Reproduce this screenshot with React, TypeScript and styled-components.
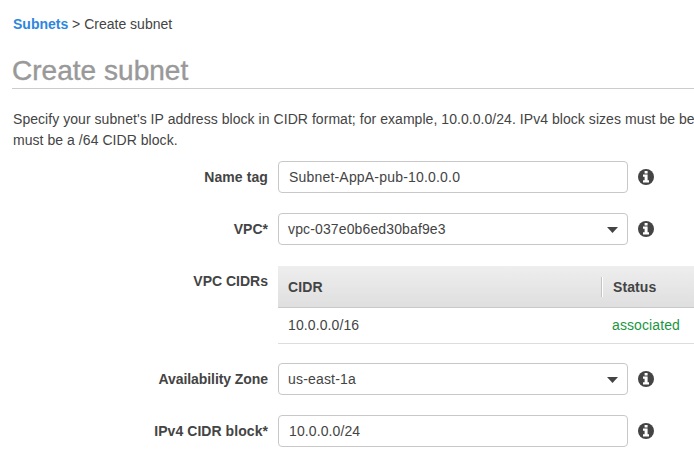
import React from "react";
import styled, { createGlobalStyle } from "styled-components";

const GlobalStyle = createGlobalStyle`
  * { box-sizing: border-box; }
  body {
    margin: 0;
    overflow: hidden;
    background: #fff;
    color: #444;
    font: 14px/20px "Liberation Sans", Arial, sans-serif;
  }
`;

const Page = styled.main`
  width: 694px;
  height: 469px;
  padding: 14px 0 0 12px;
  overflow: hidden;
`;

const Breadcrumb = styled.nav`
  height: 20px;
  padding-left: 1px;
  white-space: nowrap;
`;

const Crumb = styled.a`
  color: #2e86de;
  font-weight: bold;
  text-decoration: none;
`;

const Title = styled.h1`
  height: 41px;
  margin: 14px 0 0;
  padding-top: 6px;
  border-bottom: 1px solid #ccc;
  color: #999;
  font-size: 28px;
  font-weight: normal;
  letter-spacing: 0.03px;
  line-height: 34px;
  white-space: nowrap;
  -webkit-text-stroke: 0.4px #999;
`;

const Intro = styled.p`
  height: 42px;
  margin: 20px 0 10px;
  padding-left: 1px;
  letter-spacing: 0.05px;
  line-height: 21px;
  white-space: nowrap;
`;

const Form = styled.form`
  display: flex;
  flex-direction: column;
  gap: 20px;
`;

const Row = styled.div<{ $table?: boolean }>`
  display: grid;
  grid-template-columns: 256px ${(p) => (p.$table ? "1fr" : "350px 16px")};
  column-gap: 10px;
  align-items: ${(p) => (p.$table ? "start" : "center")};
  margin: ${(p) => (p.$table ? "1px 0 -1px" : "0")};
`;

const Label = styled.label<{ $top?: boolean; $spacing?: number }>`
  padding-top: ${(p) => (p.$top ? "5px" : "0")};
  font-weight: bold;
  letter-spacing: ${(p) => p.$spacing ?? 0}px;
  text-align: right;
  white-space: nowrap;
`;

const Field = styled.div<{ $select?: boolean }>`
  display: flex;
  align-items: center;
  justify-content: space-between;
  height: 32px;
  padding: 0 9px 0 ${(p) => (p.$select ? "9px" : "10px")};
  border: 1px solid #c8c8c8;
  border-radius: 4px;
  background: #fff;
`;

const Caret = styled.svg`
  width: 11px;
  height: 6px;
  margin-top: 1px;
  fill: #444;
`;

const InfoSvg = styled.svg`
  display: block;
  width: 16px;
  height: 16px;
`;

const Table = styled.div`
  height: 78px;
  border-bottom: 1px solid #ddd;
`;

const TableRow = styled.div<{ $header?: boolean }>`
  display: grid;
  grid-template-columns: 323px 1fr;
  align-items: center;
  height: ${(p) => (p.$header ? "42px" : "34px")};
  border-bottom: ${(p) => (p.$header ? "1px solid #c9c9c9" : "0")};
  background: ${(p) => (p.$header ? "linear-gradient(#eee, #dfdfdf)" : "#fff")};
  font-weight: ${(p) => (p.$header ? "bold" : "normal")};
`;

const Cell = styled.span<{ $divided?: boolean; $green?: boolean }>`
  padding-left: ${(p) => (p.$green || p.$divided ? "11px" : "10px")};
  border-left: ${(p) => (p.$divided ? "1px solid #c4c4c4" : "0")};
  box-shadow: ${(p) => (p.$divided ? "inset 1px 0 #fff" : "none")};
  color: ${(p) => (p.$green ? "#1a9641" : "inherit")};
  letter-spacing: 0.1px;
`;

const Text = styled.span<{ $spacing?: number }>`
  letter-spacing: ${(p) => p.$spacing ?? 0}px;
`;

function InfoIcon() {
  return (
    <InfoSvg viewBox="0 0 16 16">
      <circle cx="8" cy="8" r="8" fill="#444" />
      <path d="M6.6 2h3v2.5h-3zM5 5.6h4.6v5.7H11v2.2H5v-2.2h1.6V7.8H5z" fill="#fff" />
    </InfoSvg>
  );
}

type InputRowProps = {
  label: string;
  labelSpacing?: number;
  value: string;
  select?: boolean;
  spacing?: number;
};

function InputRow({ label, labelSpacing, value, select, spacing }: InputRowProps) {
  return (
    <Row>
      <Label $spacing={labelSpacing}>{label}</Label>
      <Field $select={select}>
        <Text $spacing={spacing}>{value}</Text>
        {select && <Caret viewBox="0 0 11 6"><path d="M0 0h11L5.5 6z" /></Caret>}
      </Field>
      <InfoIcon />
    </Row>
  );
}

export default function App() {
  return (
    <>
      <GlobalStyle />
      <Page>
        <Breadcrumb><Crumb>Subnets</Crumb> &gt; Create subnet</Breadcrumb>
        <Title>Create subnet</Title>
        <Intro>
          Specify your subnet's IP address block in CIDR format; for example, 10.0.0.0/24. IPv4 block sizes must be be
          <br />
          must be a /64 CIDR block.
        </Intro>
        <Form>
          <InputRow label="Name tag" labelSpacing={0.1} value="Subnet-AppA-pub-10.0.0.0" spacing={0.19} />
          <InputRow label="VPC*" value="vpc-037e0b6ed30baf9e3" spacing={0.13} select />
          <Row $table>
            <Label $top>VPC CIDRs</Label>
            <Table>
              <TableRow $header><Cell>CIDR</Cell><Cell $divided>Status</Cell></TableRow>
              <TableRow><Cell>10.0.0.0/16</Cell><Cell $green>associated</Cell></TableRow>
            </Table>
          </Row>
          <InputRow label="Availability Zone" labelSpacing={-0.07} value="us-east-1a" spacing={0.18} select />
          <InputRow label="IPv4 CIDR block*" labelSpacing={0.06} value="10.0.0.0/24" spacing={0.1} />
        </Form>
      </Page>
    </>
  );
}
